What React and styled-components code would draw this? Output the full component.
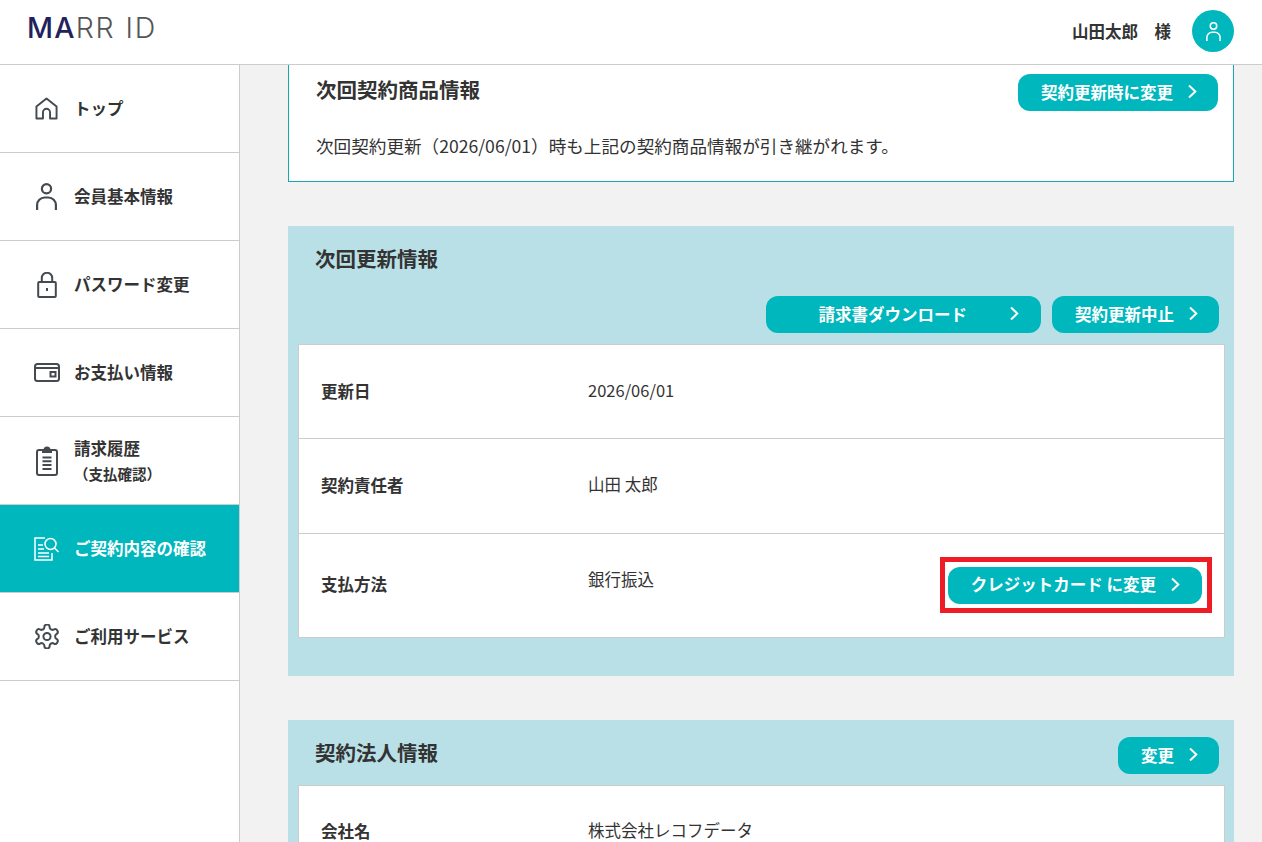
import styled, { createGlobalStyle } from 'styled-components';

const teal = '#00b7bd';
const ink = '#333333';

const GlobalStyle = createGlobalStyle`
  html, body {
    margin: 0;
    height: 100%;
    overflow: hidden;
  }
  body {
    font-family: 'Noto Sans CJK JP', 'Noto Sans', sans-serif;
    color: ${ink};
    background: #f2f2f2;
  }
  * {
    box-sizing: border-box;
  }
`;

const Page = styled.div`
  height: 842px;
  display: flex;
  flex-direction: column;
  overflow: hidden;
`;
const Header = styled.header`
  height: 65px;
  flex-shrink: 0;
  background: #fff;
  border-bottom: 1px solid #cccccc;
  display: flex;
  align-items: center;
  justify-content: space-between;
  padding: 0 28px 0 27px;
`;
const Logo = styled.div`
  font-family: 'Inter', sans-serif;
  font-size: 28.5px;
  line-height: 1;
  letter-spacing: 1.9px;
  font-weight: 300;
  color: #555555;
  margin-top: -8px;
`;
const LogoStrong = styled.span`
  font-weight: 500;
  letter-spacing: 1.2px;
  color: #23215c;
`;
const UserBox = styled.div`
  display: flex;
  align-items: center;
  gap: 21px;
  margin-top: -2px;
`;
const UserName = styled.span`
  font-size: 16.5px;
  font-weight: 700;
  white-space: pre;
`;
const Avatar = styled.div`
  width: 42px;
  height: 42px;
  border-radius: 50%;
  background: ${teal};
  display: flex;
  align-items: center;
  justify-content: center;
`;
const Body = styled.div`
  flex: 1;
  display: flex;
  min-height: 0;
`;
const Side = styled.nav`
  width: 240px;
  flex-shrink: 0;
  background: #fff;
  border-right: 1px solid #cccccc;
`;
const NavItem = styled.div`
  height: 88px;
  display: flex;
  align-items: center;
  gap: 14px;
  padding-left: 33px;
  font-size: 16.5px;
  font-weight: 700;
  background: ${(p) => (p.$active ? teal : '#fff')};
  color: ${(p) => (p.$active ? '#fff' : ink)};
  border-bottom: 1px solid #cccccc;
`;
const NavIcon = styled.span`
  width: 27px;
  display: flex;
  justify-content: center;
  flex-shrink: 0;
`;
const NavText = styled.span`
  padding-bottom: 1px;
`;
const NavLines = styled.span`
  line-height: 25px;
  margin-top: 1px;
`;
const NavSub = styled.span`
  display: block;
  font-size: 14.5px;
  line-height: 25px;
`;
const Main = styled.main`
  flex: 1;
  min-width: 0;
  padding: 0 28px 0 48px;
  display: flex;
  flex-direction: column;
  gap: 44px;
`;
const PlainCard = styled.section`
  height: 117px;
  flex-shrink: 0;
  background: #fff;
  border: 1px solid #15a9ae;
  border-top: none;
  padding: 9px 15px 0 27px;
`;
const CardHead = styled.div`
  display: flex;
  align-items: center;
  justify-content: space-between;
`;
const Title = styled.h2`
  margin: 0 0 ${(p) => p.$lift || 0}px;
  font-size: 20.5px;
  font-weight: 700;
  line-height: 28px;
`;
const Note = styled.p`
  margin: 21px 0 0;
  font-size: 17.6px;
  line-height: 28px;
`;
const Band = styled.section`
  flex-shrink: 0;
  background: #b9e0e6;
  padding: ${(p) => p.$top}px 9px 38px 10px;
`;
const BandHead = styled.div`
  display: flex;
  align-items: center;
  justify-content: space-between;
  padding: 0 6px 0 17px;
`;
const Actions = styled.div`
  display: flex;
  justify-content: flex-end;
  gap: 11px;
  padding-right: 6px;
  margin: 24px 0 11px;
`;
const Btn = styled.div`
  width: ${(p) => p.$w}px;
  height: 37px;
  flex-shrink: 0;
  border-radius: 12px;
  background: ${teal};
  color: #fff;
  font-size: 16.5px;
  font-weight: 700;
  display: flex;
  align-items: center;
  justify-content: flex-end;
  gap: ${(p) => p.$gap}px;
  padding: 0 ${(p) => p.$pr}px 2px 0;
  white-space: pre;
`;
const Panel = styled.div`
  background: #fff;
  border: 1px solid #cccccc;
  margin-top: ${(p) => p.$top || 0}px;
`;
const Row = styled.div`
  height: ${(p) => p.$h}px;
  display: flex;
  align-items: center;
  padding: ${(p) => p.$pt || 0}px 0 0 22px;
  border-top: ${(p) => (p.$first ? 'none' : '1px solid #cccccc')};
`;
const Label = styled.div`
  width: 267px;
  flex-shrink: 0;
  font-size: 16.5px;
  font-weight: 700;
  margin-top: -3px;
`;
const Value = styled.div`
  flex: 1;
  font-size: 16.5px;
  margin-top: ${(p) => p.$lift || -5}px;
`;
const Highlight = styled.div`
  border: 5px solid #ee1c25;
  padding: 5px 5px 4px 3px;
  margin-right: 12px;
  margin-top: -2px;
`;

const Chevron = () => (
  <svg width="9" height="15" viewBox="0 0 9 15" fill="none">
    <path d="M1 1.5 7.3 7.5 1 13.5" stroke="#fff" strokeWidth="2" />
  </svg>
);

const stroke = { fill: 'none', stroke: '#444a4f', strokeWidth: 2 };

const HomeIcon = () => (
  <svg width="23" height="23" viewBox="0 0 24 24" {...stroke}>
    <path d="M1.5 22.5V10L12 1.5 22.5 10v12.5h-6.8v-6.5a3.7 3.7 0 0 0-7.4 0v6.5z" strokeLinejoin="round" />
  </svg>
);
const PersonIcon = ({ color = '#444a4f', width = 21, height = 27 }) => (
  <svg width={width} height={height} viewBox="0 0 21 27" fill="none" stroke={color} strokeWidth="2.2">
    <circle cx="10.5" cy="5.8" r="4.6" />
    <path d="M1.1 27v-5a7.5 7.5 0 0 1 7.5-7.5h3.8a7.5 7.5 0 0 1 7.5 7.5v5" />
  </svg>
);
const LockIcon = () => (
  <svg width="20" height="26" viewBox="0 0 20 26" {...stroke}>
    <rect x="1.2" y="10" width="17.6" height="15" rx="1" />
    <path d="M4.8 10V6a5.2 5.2 0 0 1 10.4 0v4" />
    <path d="M10 16v3" />
  </svg>
);
const WalletIcon = () => (
  <svg width="26" height="19" viewBox="0 0 26 19" {...stroke}>
    <rect x="1" y="1" width="24" height="17" rx="2.5" />
    <path d="M1 5h24" />
    <rect x="16.5" y="9" width="5" height="4.5" />
  </svg>
);
const ClipboardIcon = () => (
  <svg width="22" height="30" viewBox="0 0 22 30" {...stroke}>
    <rect x="1" y="4" width="20" height="25" rx="2" />
    <path d="M7 4h1.5a2.5 2.5 0 0 1 5 0H15v2H7z" fill="#444a4f" />
    <path d="M6.5 11.5h9M6.5 15.3h9M6.5 19.1h9M6.5 22.9h9" />
  </svg>
);
const ReviewIcon = () => (
  <svg width="25" height="24" viewBox="0 0 25 24" fill="none" stroke="#fff" strokeWidth="1.5">
    <path d="M11 1H1v22h17v-7" />
    <path d="M4 8h5M4 12h6M4 16h11M4 19.5h11" />
    <circle cx="16.5" cy="7" r="5.5" />
    <path d="m20.5 11 4 4" />
  </svg>
);
const GearIcon = () => (
  <svg width="24" height="25" viewBox="2 1.5 20 21" fill="none" stroke="#444a4f" strokeWidth="1.7" strokeLinejoin="round">
    <path d="M12.22 2h-.44a2 2 0 0 0-2 2v.18a2 2 0 0 1-1 1.73l-.43.25a2 2 0 0 1-2 0l-.15-.08a2 2 0 0 0-2.73.73l-.22.38a2 2 0 0 0 .73 2.73l.15.1a2 2 0 0 1 1 1.72v.51a2 2 0 0 1-1 1.74l-.15.09a2 2 0 0 0-.73 2.73l.22.38a2 2 0 0 0 2.73.73l.15-.08a2 2 0 0 1 2 0l.43.25a2 2 0 0 1 1 1.73V20a2 2 0 0 0 2 2h.44a2 2 0 0 0 2-2v-.18a2 2 0 0 1 1-1.73l.43-.25a2 2 0 0 1 2 0l.15.08a2 2 0 0 0 2.73-.73l.22-.39a2 2 0 0 0-.73-2.73l-.15-.08a2 2 0 0 1-1-1.74v-.5a2 2 0 0 1 1-1.74l.15-.09a2 2 0 0 0 .73-2.73l-.22-.38a2 2 0 0 0-2.73-.73l-.15.08a2 2 0 0 1-2 0l-.43-.25a2 2 0 0 1-1-1.73V4a2 2 0 0 0-2-2z" />
    <circle cx="12" cy="12" r="3" />
  </svg>
);

const navItems = [
  { icon: <HomeIcon />, label: 'トップ' },
  { icon: <PersonIcon />, label: '会員基本情報' },
  { icon: <LockIcon />, label: 'パスワード変更' },
  { icon: <WalletIcon />, label: 'お支払い情報' },
  { icon: <ClipboardIcon />, label: '請求履歴', sub: '（支払確認）' },
  { icon: <ReviewIcon />, label: 'ご契約内容の確認', active: true },
  { icon: <GearIcon />, label: 'ご利用サービス' },
];

function App() {
  return (
    <Page>
      <GlobalStyle />
      <Header>
        <Logo>
          <LogoStrong>MA</LogoStrong>RR ID
        </Logo>
        <UserBox>
          <UserName>山田太郎　様</UserName>
          <Avatar>
            <PersonIcon color="#fff" width={15} height={19} />
          </Avatar>
        </UserBox>
      </Header>
      <Body>
        <Side>
          {navItems.map((item) => (
            <NavItem key={item.label} $active={item.active}>
              <NavIcon>{item.icon}</NavIcon>
              {item.sub ? (
                <NavLines>
                  {item.label}
                  <NavSub>{item.sub}</NavSub>
                </NavLines>
              ) : (
                <NavText>{item.label}</NavText>
              )}
            </NavItem>
          ))}
        </Side>
        <Main>
          <PlainCard>
            <CardHead>
              <Title $lift={8}>次回契約商品情報</Title>
              <Btn $w={200} $gap={15} $pr={21}>
                契約更新時に変更
                <Chevron />
              </Btn>
            </CardHead>
            <Note>次回契約更新（2026/06/01）時も上記の契約商品情報が引き継がれます。</Note>
          </PlainCard>
          <Band $top={18}>
            <BandHead>
              <Title>次回更新情報</Title>
            </BandHead>
            <Actions>
              <Btn $w={275} $gap={43} $pr={22}>
                請求書ダウンロード
                <Chevron />
              </Btn>
              <Btn $w={167} $gap={15} $pr={21}>
                契約更新中止
                <Chevron />
              </Btn>
            </Actions>
            <Panel>
              <Row $first $h={93} $pt={2}>
                <Label>更新日</Label>
                <Value>2026/06/01</Value>
              </Row>
              <Row $h={95}>
                <Label>契約責任者</Label>
                <Value>山田 太郎</Value>
              </Row>
              <Row $h={104}>
                <Label>支払方法</Label>
                <Value $lift={-13}>銀行振込</Value>
                <Highlight>
                  <Btn $w={254} $gap={15} $pr={22}>
                    クレジットカード に変更
                    <Chevron />
                  </Btn>
                </Highlight>
              </Row>
            </Panel>
          </Band>
          <Band $top={17}>
            <BandHead>
              <Title $lift={8}>契約法人情報</Title>
              <Btn $w={101} $gap={15} $pr={21}>
                変更
                <Chevron />
              </Btn>
            </BandHead>
            <Panel $top={11}>
              <Row $first $h={93}>
                <Label>会社名</Label>
                <Value>株式会社レコフデータ</Value>
              </Row>
            </Panel>
          </Band>
        </Main>
      </Body>
    </Page>
  );
}

export default App;
